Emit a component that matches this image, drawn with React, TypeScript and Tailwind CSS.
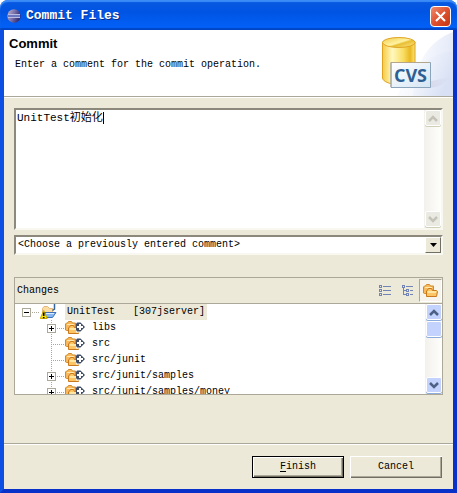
import { useState } from "react"

const resources = [
    { name: "libs", expandable: true },
    { name: "src", expandable: false },
    { name: "src/junit", expandable: false },
    { name: "src/junit/samples", expandable: true },
    { name: "src/junit/samples/money", expandable: true },
]

const sunken = "border-2 border-t-[#8c897c] border-l-[#8c897c] border-r-[#f8f7f0] border-b-[#f8f7f0] bg-white"

function EclipseLogo() {
    return (
        <svg width="14" height="14" viewBox="0 0 14 14" aria-hidden="true">
            <defs>
                <linearGradient id="eclipse" x1="0" y1="0" x2="1" y2="0.4">
                    <stop offset="0" stopColor="#c9b5c6" />
                    <stop offset="0.5" stopColor="#7d76ae" />
                    <stop offset="1" stopColor="#332d72" />
                </linearGradient>
            </defs>
            <circle cx="7" cy="7" r="6.7" fill="url(#eclipse)" />
            <path d="M1 7H13" stroke="#6b76bd" strokeWidth="3" />
            <path d="M1 5.500H13M1 8.500H13" stroke="#b9bde6" />
        </svg>
    )
}

function CvsBanner() {
    return (
        <svg width="96" height="66" viewBox="0 0 96 66" aria-hidden="true">
            <defs>
                <linearGradient id="sky" x1="0" y1="0" x2="1" y2="0.3">
                    <stop offset="0" stopColor="#ffffff" />
                    <stop offset="1" stopColor="#e3e9f8" />
                </linearGradient>
                <linearGradient id="sky2" x1="0" y1="0" x2="1" y2="0.6">
                    <stop offset="0" stopColor="#ffffff" stopOpacity="0" />
                    <stop offset="1" stopColor="#ccd7f1" stopOpacity="0.5" />
                </linearGradient>
                <linearGradient id="gold" x1="0" y1="0" x2="1" y2="0">
                    <stop offset="0" stopColor="#f5ca43" />
                    <stop offset="0.3" stopColor="#fff9bf" />
                    <stop offset="0.65" stopColor="#f8dc61" />
                    <stop offset="0.85" stopColor="#e9b820" />
                    <stop offset="1" stopColor="#fbe57a" />
                </linearGradient>
                <linearGradient id="top" x1="0" y1="0" x2="1" y2="1">
                    <stop offset="0" stopColor="#f0c948" />
                    <stop offset="0.5" stopColor="#fff3a1" />
                    <stop offset="0.6" stopColor="#e9be34" />
                    <stop offset="1" stopColor="#fff08c" />
                </linearGradient>
                <linearGradient id="card" x1="0" y1="0" x2="1" y2="1">
                    <stop offset="0" stopColor="#ffffff" />
                    <stop offset="1" stopColor="#d4e5f4" />
                </linearGradient>
                <linearGradient id="shade" x1="0" y1="0" x2="1" y2="0">
                    <stop offset="0" stopColor="#75698f" stopOpacity="0.5" />
                    <stop offset="1" stopColor="#a99fbe" stopOpacity="0" />
                </linearGradient>
            </defs>
            <path d="M56 66C58 34 70 12 96 2V66Z" fill="url(#sky)" />
            <path d="M40 66C54 38 72 24 96 21V66Z" fill="url(#sky2)" />
            <path d="M70 52L93 47Q86 57 72 58H36Z" fill="url(#shade)" />
            <path d="M25.500 12V48C26 52 34 54.500 42 54.500C50 54.500 58 53 58 49V12Z" fill="url(#gold)" stroke="#dda321" />
            <ellipse cx="41.800" cy="12.500" rx="16.300" ry="5" fill="url(#top)" stroke="#e0a522" />
            <path d="M34 32.500H73.500V57.500H34Z" fill="url(#card)" stroke="#8aa4bc" />
            <path d="M34 57V32.500H73" fill="none" stroke="#b5a58d" />
            <text x="53.500" y="52" textAnchor="middle" fontSize="18" fontWeight="700" fontFamily="'Open Sans', sans-serif" fill="#2e5f93">CVS</text>
        </svg>
    )
}

function Folders({ arrow = false }: { arrow?: boolean }) {
    return (
        <svg width={arrow ? 21 : 15} height="16" viewBox={arrow ? "0 0 21 16" : "0 0 15 16"} aria-hidden="true" className="shrink-0">
            <path d="M.5 10V4L1.500 3H2.500L3.500 1.500H6.500L7.500 3H10.500V10.500H1.500Z" fill="#f7b95c" stroke="#d08a2e" />
            <path d="M2 4.500H9" stroke="#ffe9ae" />
            <path d="M3.500 13.500V8L4.500 7L5.500 5.500H8.500L9.500 7.500H13.500L14.500 8.500L13.500 13.500Z" fill="#fbc565" stroke="#c9791c" />
            <path d="M4.500 8.500H13M4.500 9.500H13" stroke="#ffe6a2" />
            {arrow && (
                <>
                    <path d="M11 2H16L21 7L16 12.500H11Z" fill="#fff" />
                    <path d="M12 2.500H15.500L20 7L15.500 11.500H12L11 10V4Z" fill="#3f4c63" />
                    <path d="M12 7H18M15 4V10" stroke="#fff" strokeWidth="2" />
                </>
            )}
        </svg>
    )
}

function ProjectIcon() {
    return (
        <svg width="17" height="16" viewBox="0 0 17 16" aria-hidden="true" className="shrink-0">
            <path d="M2.500 9V4.500L4 2.500H7.500L9.500 4.500H12.500V9Z" fill="#fbdca2" stroke="#e0b77c" />
            <path d="M14.500 0V5L12.500 6.500" fill="none" stroke="#34669f" strokeWidth="1.500" />
            <path d="M4.500 8.500H16L12.500 13.500H6Z" fill="#87b8f1" stroke="#406fb8" />
            <path d="M6 9.500H14" stroke="#d9edff" />
            <path d="M3.700 6.500L7.200 14.500H.3Z" fill="#ffe600" stroke="#c7a800" />
            <path d="M3.700 8.500V12M3.700 13V14.200" stroke="#000" strokeWidth="1.600" />
        </svg>
    )
}

function Expander({ box, open = false, branch = false }: { box: boolean; open?: boolean; branch?: boolean }) {
    return (
        <svg width="18" height="16" viewBox="0 0 18 16" shapeRendering="crispEdges" aria-hidden="true" className="shrink-0">
            {branch && <path d="M4.500 0V16" stroke="#aca899" strokeDasharray="1 1" />}
            <path d="M4 8.500H18" stroke="#aca899" strokeDasharray="1 1" />
            {box && (
                <>
                    <path d="M.5 4.500H8.500V12.500H.5Z" fill="#fff" stroke="#aca899" />
                    <path d={open ? "M2 8.500H7" : "M2 8.500H7M4.500 6V11"} stroke="#000" />
                </>
            )}
        </svg>
    )
}

function ScrollButton({ dir, disabled = false }: { dir: "up" | "down"; disabled?: boolean }) {
    return (
        <button
            type="button"
            aria-label={"Scroll " + dir}
            disabled={disabled}
            className={
                "flex h-4 w-4 shrink-0 items-center justify-center rounded-xs border border-white " +
                (disabled ? "bg-[#ebeae2] text-[#c5c3b8] shadow-[0_1px_0_#cfcfb8]" : "bg-[#c3d3fd] text-[#4d6185] shadow-[0_1px_0_#8dabdd]")
            }
        >
            <svg width="10" height="7" viewBox="0 0 10 7" aria-hidden="true">
                <path d={dir === "up" ? "M1 6L5 2L9 6" : "M1 1L5 5L9 1"} fill="none" stroke="currentColor" strokeWidth="2.5" />
            </svg>
        </button>
    )
}

export default function App() {
    const [comment, setComment] = useState("UnitTest初始化")
    const [mode, setMode] = useState("compressed")

    return (
        <div className="flex min-h-screen flex-col bg-white font-['Liberation_Mono','Noto_Sans_CJK_SC',monospace] text-[10px] leading-4 text-black">
            <div className="flex h-[30px] items-center rounded-t-lg bg-linear-to-b from-[#0a5ae0] from-0% via-[#0054e3] via-40% to-[#0363fb] px-[7px] pt-[2px] shadow-[inset_0_2px_1px_#3c8cf8,inset_0_-2px_1px_#0045c5]">
                <EclipseLogo />
                <h1 className="ml-[5px] flex-1 text-[13px] font-bold text-white [text-shadow:1px_1px_0_#0a2a82]">Commit Files</h1>
                <button type="button" aria-label="Close" className="-mr-px flex h-[21px] w-[21px] items-center justify-center rounded-sm border border-white bg-linear-to-br from-[#ee8a6c] via-[#dd5130] to-[#c4330c]">
                    <svg width="11" height="11" viewBox="0 0 11 11" aria-hidden="true">
                        <path d="M1 1L10 10M10 1L1 10" stroke="#fff" strokeWidth="2" />
                    </svg>
                </button>
            </div>

            <div className="flex flex-1 flex-col border-x-4 border-b-4 border-r-[#0831c9] border-b-[#0831c9] border-l-[#0c4fe2] bg-[#ece9d8]">
                <header className="flex h-[67px] justify-between border-b border-[#aca899] bg-white">
                    <div className="pt-[6px] pl-[5px]">
                        <h2 className="font-['Liberation_Sans',sans-serif] text-[13px] font-bold">Commit</h2>
                        <p className="pt-[5px] pl-[6px]">Enter a comment for the commit operation.</p>
                    </div>
                    <CvsBanner />
                </header>

                <main className="flex flex-1 flex-col border-t border-white px-[10px] pt-[10px]">
                    <div className={"relative flex h-[122px] " + sunken}>
                        <textarea
                            aria-label="Comment"
                            value={comment}
                            onChange={(e) => setComment(e.target.value)}
                            className="min-w-0 flex-1 resize-none overflow-hidden bg-transparent pl-px text-[11px] outline-none"
                        />
                        <span className="pointer-events-none absolute top-[2px] left-[87px] h-3 w-px bg-black" />
                        <div className="flex w-[17px] flex-col items-center justify-between bg-linear-to-r from-[#f3f1ec] to-[#fefefb] pb-px">
                            <ScrollButton dir="up" disabled />
                            <ScrollButton dir="down" disabled />
                        </div>
                    </div>

                    <div className={"relative mt-[5px] h-5 " + sunken}>
                        <select aria-label="Previous comments" className="block h-4 w-full appearance-none bg-transparent pl-[2px] outline-none">
                            <option>&lt;Choose a previously entered comment&gt;</option>
                        </select>
                        <span className="pointer-events-none absolute top-0 right-0 flex h-4 w-4 items-center justify-center border border-t-white border-r-[#716f64] border-b-[#716f64] border-l-white bg-[#ece9d8]">
                            <svg width="7" height="4" viewBox="0 0 7 4" aria-hidden="true">
                                <path d="M0 0H7L3.500 4Z" />
                            </svg>
                        </span>
                    </div>

                    <section aria-labelledby="changes" className="mt-[22px] border border-[#aca899]">
                        <div className="flex h-[26px] items-center border-b border-[#aca899]">
                            <h3 id="changes" className="flex-1 pl-[2px]">Changes</h3>
                            <button type="button" aria-label="Flat" onClick={() => setMode("flat")} className="flex h-[23px] w-[23px] items-center justify-center">
                                <svg width="12" height="12" viewBox="0 0 12 12" fill="none" stroke="#7284b5" shapeRendering="crispEdges" aria-hidden="true">
                                    <path d="M.5 .5H2.500V2.500H.5ZM.5 4.500H2.500V6.500H.5ZM.5 8.500H2.500V10.500H.5ZM4 1.500H12M4 5.500H12M4 9.500H12" />
                                </svg>
                            </button>
                            <button type="button" aria-label="Tree" onClick={() => setMode("tree")} className="flex h-[23px] w-[23px] items-center justify-center">
                                <svg width="12" height="12" viewBox="0 0 12 12" fill="none" stroke="#7284b5" shapeRendering="crispEdges" aria-hidden="true">
                                    <path d="M.5 .5H2.500V2.500H.5ZM4.500 4.500H6.500V6.500H4.500ZM4.500 8.500H6.500V10.500H4.500ZM4 1.500H11M1.500 3V9.500H4M1.500 5.500H4M8 5.500H11M8 9.500H11" />
                                </svg>
                            </button>
                            <button type="button" aria-label="Compressed folders" aria-pressed={mode === "compressed"} onClick={() => setMode("compressed")} className="flex h-[23px] w-[23px] items-center justify-center border border-t-[#aca899] border-r-white border-b-white border-l-[#aca899] bg-[#f6f4ec]">
                                <Folders />
                            </button>
                        </div>
                        <div className="flex h-[90px] bg-white">
                            <ul role="tree" aria-label="Changes" className="flex-1 overflow-hidden">
                                <li role="treeitem" aria-expanded="true">
                                    <div className="flex h-4 items-center pl-[7px]">
                                        <Expander box open />
                                        <ProjectIcon />
                                        <span className="ml-2 bg-[#ece9d8] px-[2px] whitespace-pre">UnitTest   [307jserver]</span>
                                    </div>
                                    <ul role="group">
                                        {resources.map((item) => (
                                            <li role="treeitem" key={item.name} className="flex h-4 items-center pl-8">
                                                <Expander box={item.expandable} branch />
                                                <Folders arrow />
                                                <span className="ml-[6px]">{item.name}</span>
                                            </li>
                                        ))}
                                    </ul>
                                </li>
                            </ul>
                            <div className="flex w-[17px] flex-col items-center bg-linear-to-r from-[#f3f1ec] to-[#fefefb] pb-px">
                                <ScrollButton dir="up" />
                                <div className="mt-px h-4 w-4 rounded-xs border border-white bg-[#c3d3fd] shadow-[0_1px_0_#8dabdd]" />
                                <div className="flex-1" />
                                <ScrollButton dir="down" />
                            </div>
                        </div>
                    </section>
                </main>

                <footer className="flex h-[46px] justify-end gap-[6px] border-t border-[#aca899] px-[11px] pt-3 shadow-[inset_0_1px_0_#fff]">
                    <button type="button" className="h-[22px] w-[92px] border border-black shadow-[inset_1px_1px_0_#fff,inset_-1px_-1px_0_#716f64,inset_-2px_-2px_0_#aca899]">
                        <span className="underline underline-offset-2">F</span>inish
                    </button>
                    <button type="button" className="h-[22px] w-[92px] shadow-[inset_1px_1px_0_#fff,inset_-1px_-1px_0_#716f64,inset_-2px_-2px_0_#aca899]">
                        Cancel
                    </button>
                </footer>
            </div>
        </div>
    )
}
